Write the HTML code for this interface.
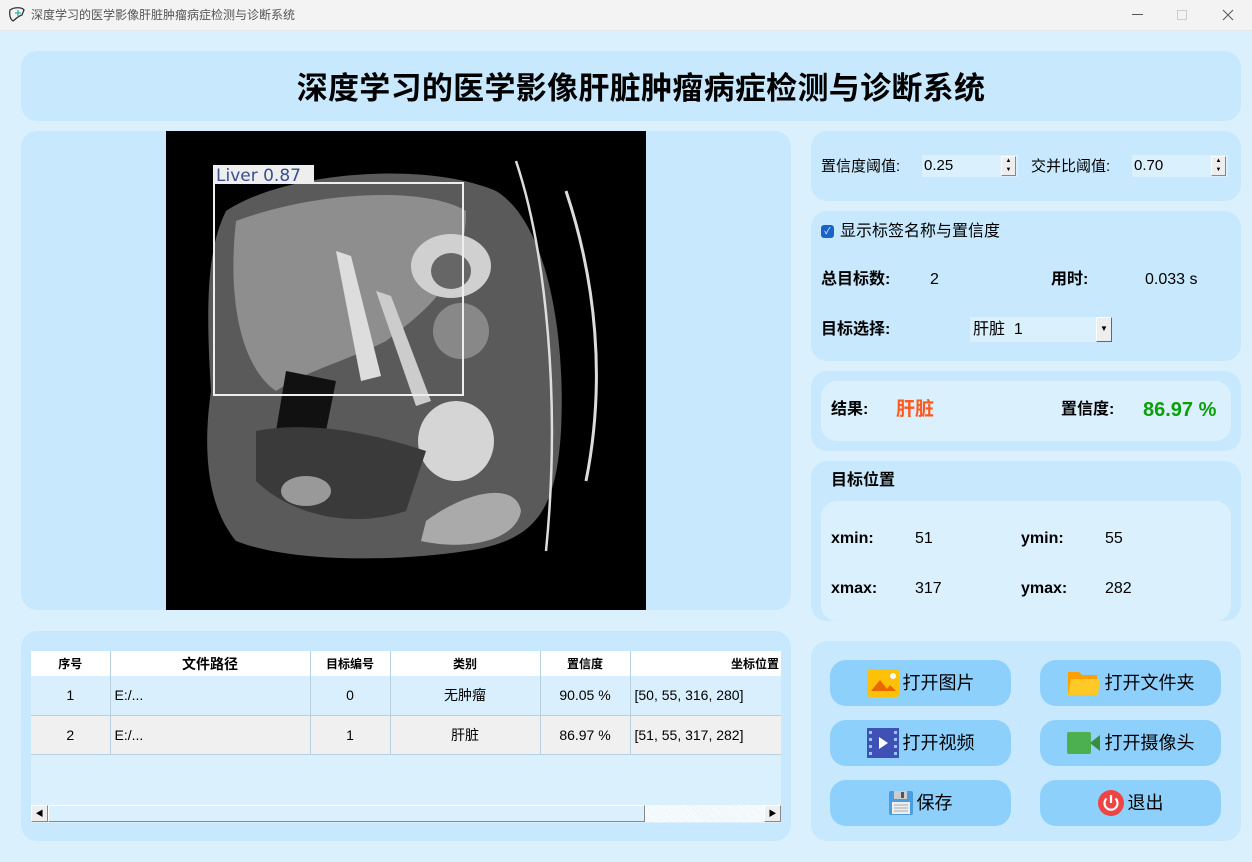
<!DOCTYPE html>
<html><head><meta charset="utf-8">
<style>
*{margin:0;padding:0;box-sizing:border-box}
body{width:1252px;height:862px;overflow:hidden;background:#dbf0fd;font-family:"Liberation Sans","Noto Sans CJK SC",sans-serif;position:relative;color:#000}
.abs{position:absolute;line-height:20px;white-space:nowrap}
.panel{position:absolute;background:#c8e9fd;border-radius:16px}
.inner{position:absolute;background:#dbf0fd;border-radius:16px}
.b{font-weight:bold}
.btn{position:absolute;width:181px;height:46px;background:#8ed0fc;border-radius:16px;font-size:18px;display:flex;align-items:center;justify-content:center;gap:4px;line-height:20px}
.spin{position:absolute;width:96px;height:22px;background:#dbf0fd;font-size:15px;padding-left:2px;line-height:22px}
.spin .ar{position:absolute;right:2px;top:1px;width:15px;height:20px;border:1px solid #888;border-left-color:#fff;border-top-color:#fff;background:#eee;font-size:6px;line-height:9px;text-align:center}
table{border-collapse:collapse;position:absolute;left:31px;top:651px;width:750px;font-size:14px;line-height:18px}
td,th{border-right:1px solid #b8cfe0;text-align:center}
th{height:25px;background:#fff;font-size:12px;border-bottom:none}
td{height:39px;border-bottom:1px solid #b8cfe0}
</style></head><body>
<div class="abs" style="left:0;top:0;width:1252px;height:31px;background:#f3f3f3;border-bottom:1px solid #e8e8e8"></div>
<svg class="abs" style="left:8px;top:7px" width="18" height="16" viewBox="0 0 18 16"><path d="M2 3 C6 0 14 0 16 3 L14 8 C10 9 8 12 5 14 C2 12 1 7 2 3Z" fill="none" stroke="#333" stroke-width="1.3"/><path d="M10 3 V9 M7 6 H13" stroke="#2b9" stroke-width="1.3"/></svg>
<div class="abs" style="left:31px;top:5px;font-size:12px;color:#555">深度学习的医学影像肝脏肿瘤病症检测与诊断系统</div>
<div class="abs" style="left:1132px;top:14px;width:11px;height:1px;background:#555"></div>
<div class="abs" style="left:1177px;top:10px;width:10px;height:10px;border:1px solid #ccc"></div>
<svg class="abs" style="left:1222px;top:9px" width="12" height="12"><path d="M1 1L11 11M11 1L1 11" stroke="#555" stroke-width="1"/></svg>

<div class="panel" style="left:21px;top:51px;width:1220px;height:70px"></div>
<div class="abs b" style="left:0;top:71px;width:1282px;text-align:center;font-size:31px;line-height:36px;letter-spacing:0.3px">深度学习的医学影像肝脏肿瘤病症检测与诊断系统</div>

<div class="panel" style="left:21px;top:131px;width:770px;height:479px"></div>
<svg class="abs" style="left:166px;top:131px" width="480" height="479" viewBox="0 0 480 479">
<rect width="480" height="479" fill="#000"/>
<path d="M60 80 C120 40 260 30 330 60 C380 90 400 200 395 300 C390 380 370 410 300 420 C220 432 120 430 70 410 C45 380 35 330 45 260 C40 180 40 120 60 80Z" fill="#5a5a5a"/>
<path d="M70 90 C150 60 260 55 300 80 C300 150 260 180 220 210 C180 230 140 240 110 260 C80 240 60 180 70 90Z" fill="#8e8e8e"/>
<path d="M170 120 L185 125 L215 245 L195 250Z" fill="#ddd"/>
<path d="M210 160 L225 165 L265 270 L250 275Z" fill="#ccc"/>
<ellipse cx="285" cy="135" rx="40" ry="32" fill="#d0d0d0"/>
<ellipse cx="285" cy="140" rx="20" ry="18" fill="#666"/>
<ellipse cx="290" cy="310" rx="38" ry="40" fill="#d5d5d5"/>
<ellipse cx="295" cy="200" rx="28" ry="28" fill="#888"/>
<path d="M120 240 L170 250 L160 300 L110 300Z" fill="#111"/>
<path d="M90 300 C140 290 200 300 260 320 L240 380 C180 400 120 380 90 350Z" fill="#3a3a3a"/>
<path d="M260 390 C300 360 350 350 355 380 C350 410 300 420 255 410Z" fill="#aaa"/>
<ellipse cx="140" cy="360" rx="25" ry="15" fill="#999"/>
<path d="M350 30 C380 120 395 270 380 420" fill="none" stroke="#ddd" stroke-width="2.5"/>
<path d="M400 60 C430 150 440 250 420 350" fill="none" stroke="#ddd" stroke-width="3"/>
<rect x="48" y="52" width="249" height="212" fill="none" stroke="#eee" stroke-width="2"/>
<rect x="47" y="34" width="101" height="18" fill="#eee"/>
<text x="50" y="50" font-family="DejaVu Sans,sans-serif" font-size="17" fill="#3a4e90">Liver 0.87</text>
</svg>

<div class="panel" style="left:21px;top:631px;width:770px;height:210px"></div>
<div class="abs" style="left:31px;top:651px;width:750px;height:172px;background:#dbf0fd"></div>
<table>
<tr><th style="width:79px">序号</th><th style="width:200px;font-size:14px">文件路径</th><th style="width:80px">目标编号</th><th style="width:150px">类别</th><th style="width:90px">置信度</th><th style="text-align:right;padding-right:2px;border-right:none">坐标位置</th></tr>
<tr style="background:#d9effd"><td>1</td><td style="text-align:left;padding-left:4px">E:/...</td><td>0</td><td>无肿瘤</td><td>90.05 %</td><td style="text-align:left;padding-left:4px;border-right:none">[50, 55, 316, 280]</td></tr>
<tr style="background:#f0f0f0"><td>2</td><td style="text-align:left;padding-left:4px">E:/...</td><td>1</td><td>肝脏</td><td>86.97 %</td><td style="text-align:left;padding-left:4px;border-right:none">[51, 55, 317, 282]</td></tr>
</table>
<div class="abs" style="left:31px;top:805px;width:750px;height:17px;background:repeating-linear-gradient(45deg,#e8f4fc 0 1px,#fff 1px 2px)"></div>
<div class="abs" style="left:31px;top:805px;width:17px;height:17px;background:#eee;border:1px solid #888;border-left-color:#fff;border-top-color:#fff;font-size:8px;line-height:15px;text-align:center">◀</div>
<div class="abs" style="left:48px;top:805px;width:597px;height:17px;background:#dbf0fd;border:1px solid #888;border-left-color:#fff;border-top-color:#fff"></div>
<div class="abs" style="left:764px;top:805px;width:17px;height:17px;background:#eee;border:1px solid #888;border-left-color:#fff;border-top-color:#fff;font-size:8px;line-height:15px;text-align:center">▶</div>

<div class="panel" style="left:811px;top:131px;width:430px;height:70px"></div>
<div class="abs" style="left:821px;top:157px;font-size:15px">置信度阈值:</div>
<div class="spin" style="left:922px;top:155px">0.25<div class="ar">▲<br>▼</div></div>
<div class="abs" style="left:1031px;top:157px;font-size:15px">交并比阈值:</div>
<div class="spin" style="left:1132px;top:155px">0.70<div class="ar">▲<br>▼</div></div>

<div class="panel" style="left:811px;top:211px;width:430px;height:150px"></div>
<div class="abs" style="left:821px;top:225px;width:13px;height:13px;background:#1a64c8;border-radius:3px;color:#fff;font-size:9px;text-align:center;line-height:13px">✓</div>
<div class="abs" style="left:840px;top:222px;font-size:16px">显示标签名称与置信度</div>
<div class="abs b" style="left:821px;top:270px;font-size:16px">总目标数:</div>
<div class="abs" style="left:930px;top:270px;font-size:16px">2</div>
<div class="abs b" style="left:1051px;top:270px;font-size:16px">用时:</div>
<div class="abs" style="left:1145px;top:270px;font-size:16px">0.033 s</div>
<div class="abs b" style="left:821px;top:320px;font-size:16px">目标选择:</div>
<div class="abs" style="left:970px;top:317px;width:132px;height:25px;background:#dbf0fd;font-size:16px;line-height:25px;padding-left:3px">肝脏&nbsp; 1</div>
<div class="abs" style="left:1096px;top:317px;width:16px;height:25px;background:#eee;border:1px solid #666;border-left-color:#fff;border-top-color:#fff;font-size:8px;text-align:center;line-height:22px">▼</div>

<div class="panel" style="left:811px;top:371px;width:430px;height:80px"></div>
<div class="inner" style="left:821px;top:381px;width:410px;height:60px"></div>
<div class="abs b" style="left:831px;top:400px;font-size:16px">结果:</div>
<div class="abs b" style="left:896px;top:400px;font-size:19px;color:#ff5a1e">肝脏</div>
<div class="abs b" style="left:1061px;top:400px;font-size:16px">置信度:</div>
<div class="abs b" style="left:1143px;top:400px;font-size:20px;color:#0aa00a">86.97 %</div>

<div class="panel" style="left:811px;top:461px;width:430px;height:160px"></div>
<div class="abs b" style="left:831px;top:471px;font-size:16px">目标位置</div>
<div class="inner" style="left:821px;top:501px;width:410px;height:120px"></div>
<div class="abs b" style="left:831px;top:529px;font-size:16px">xmin:</div>
<div class="abs" style="left:915px;top:529px;font-size:16px">51</div>
<div class="abs b" style="left:1021px;top:529px;font-size:16px">ymin:</div>
<div class="abs" style="left:1105px;top:529px;font-size:16px">55</div>
<div class="abs b" style="left:831px;top:579px;font-size:16px">xmax:</div>
<div class="abs" style="left:915px;top:579px;font-size:16px">317</div>
<div class="abs b" style="left:1021px;top:579px;font-size:16px">ymax:</div>
<div class="abs" style="left:1105px;top:579px;font-size:16px">282</div>

<div class="panel" style="left:811px;top:641px;width:430px;height:200px"></div>
<div class="btn" style="left:830px;top:660px"><svg width="32" height="28"><rect width="32" height="28" rx="3" fill="#ffc107"/><path d="M4 22 L13 11 L20 20 L23 16 L29 22Z" fill="#e65100" opacity=".8"/><circle cx="26" cy="7" r="3" fill="#fff"/></svg>打开图片</div>
<div class="btn" style="left:1040px;top:660px"><svg width="34" height="28"><path d="M1 3 H12 L15 6 H30 V26 H1Z" fill="#ffa000"/><path d="M4 10 H33 L31 26 H1Z" fill="#ffca28"/></svg>打开文件夹</div>
<div class="btn" style="left:830px;top:720px"><svg width="32" height="30"><rect width="32" height="30" fill="#3f51b5"/><g fill="#90caf9"><rect x="2" y="3" width="3" height="3"/><rect x="2" y="10" width="3" height="3"/><rect x="2" y="17" width="3" height="3"/><rect x="2" y="24" width="3" height="3"/><rect x="27" y="3" width="3" height="3"/><rect x="27" y="10" width="3" height="3"/><rect x="27" y="17" width="3" height="3"/><rect x="27" y="24" width="3" height="3"/></g><path d="M12 9 L21 15 L12 21Z" fill="#fff"/></svg>打开视频</div>
<div class="btn" style="left:1040px;top:720px"><svg width="34" height="22"><rect width="24" height="22" rx="2" fill="#4caf50"/><path d="M23 11 L33 3 V19Z" fill="#388e3c"/></svg>打开摄像头</div>
<div class="btn" style="left:830px;top:780px"><svg width="24" height="24"><rect width="24" height="24" rx="2" fill="#4a9ee0"/><rect x="5" y="0" width="13" height="8" fill="#ccc"/><rect x="12" y="1" width="3" height="6" fill="#555"/><rect x="3" y="11" width="18" height="12" fill="#eee"/><path d="M5 14H19M5 17H19M5 20H19" stroke="#aaa"/></svg>保存</div>
<div class="btn" style="left:1040px;top:780px"><svg width="26" height="26"><circle cx="13" cy="13" r="13" fill="#ef4444"/><path d="M8.5 8.5 A6.5 6.5 0 1 0 17.5 8.5" fill="none" stroke="#fff" stroke-width="2.2"/><path d="M13 5V13" stroke="#fff" stroke-width="2.2"/></svg>退出</div>
</body></html>
